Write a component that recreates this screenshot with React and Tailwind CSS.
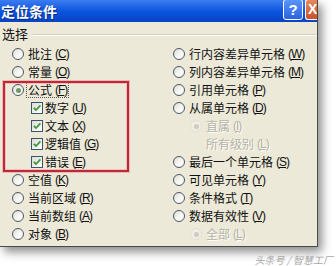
import React from "react";

const cjk = { fontFamily: '"Noto Sans CJK SC", "Noto Sans", sans-serif' };

const leftRows = [
    { type: "radio", label: "批注", key: "C" },
    { type: "radio", label: "常量", key: "O" },
    { type: "radio", label: "公式", key: "F", checked: true, focus: true },
    { type: "check", label: "数字", key: "U" },
    { type: "check", label: "文本", key: "X" },
    { type: "check", label: "逻辑值", key: "G" },
    { type: "check", label: "错误", key: "E" },
    { type: "radio", label: "空值", key: "K" },
    { type: "radio", label: "当前区域", key: "R" },
    { type: "radio", label: "当前数组", key: "A" },
    { type: "radio", label: "对象", key: "B" },
];

const rightRows = [
    { type: "radio", label: "行内容差异单元格", key: "W" },
    { type: "radio", label: "列内容差异单元格", key: "M" },
    { type: "radio", label: "引用单元格", key: "P" },
    { type: "radio", label: "从属单元格", key: "D" },
    { type: "sub", label: "直属", key: "I", checked: true },
    { type: "sub", label: "所有级别", key: "L", hideMark: true },
    { type: "radio", label: "最后一个单元格", key: "S" },
    { type: "radio", label: "可见单元格", key: "Y" },
    { type: "radio", label: "条件格式", key: "T" },
    { type: "radio", label: "数据有效性", key: "V" },
    { type: "sub", label: "全部", key: "L", checked: true },
];

function Label({ label, hotkey, disabled, focus }) {
    return (
        <span
            className={
                "flex items-center leading-none " +
                (disabled ? "text-[#b5b2a3] [text-shadow:1px_1px_0_#ffffff]" : "text-[#111]") +
                (focus ? " outline outline-1 outline-dotted outline-[#555] outline-offset-[1px]" : "")
            }
        >
            <span className="text-[12px]" style={cjk}>{label}</span>
            <span className="ml-[3px] text-[12px] tracking-[-1px] font-['Liberation_Sans',sans-serif]">
                (<span className="underline">{hotkey}</span>)
            </span>
        </span>
    );
}

function Radio({ checked, disabled, hidden }) {
    if (hidden) return <span className="w-[12px] h-[12px]" />;
    return (
        <span
            className={
                "flex h-[12px] w-[12px] items-center justify-center rounded-full border " +
                (disabled
                    ? "border-[#e2dfd4] bg-[#efede4]"
                    : "border-[#4a5668] bg-linear-to-br from-[#dcdad0] via-[#f6f5f0] to-white")
            }
        >
            {checked && (
                <span
                    className={
                        "h-[5px] w-[5px] rounded-full " + (disabled ? "bg-[#cfccbe]" : "bg-[#6f9a62]")
                    }
                />
            )}
        </span>
    );
}

function Check() {
    return (
        <span className="flex h-[12px] w-[12px] items-center justify-center border border-[#3a5470] bg-linear-to-br from-[#dedcd2] to-white">
            <svg width="10" height="10" viewBox="0 0 10 10">
                <path d="M1.8 4.8 L4 7 L8.4 2.4" fill="none" stroke="#3f9a3f" strokeWidth="1.8" />
            </svg>
        </span>
    );
}

function Row({ row }) {
    if (row.type === "check") {
        return (
            <div className="flex h-[18px] items-center gap-[2px] pl-[19px]">
                <Check />
                <Label label={row.label} hotkey={row.key} />
            </div>
        );
    }
    if (row.type === "sub") {
        return (
            <div className="flex h-[18px] items-center gap-[4px] pl-[17px]">
                <Radio checked={row.checked} disabled hidden={row.hideMark} />
                <Label label={row.label} hotkey={row.key} disabled />
            </div>
        );
    }
    return (
        <div className="flex h-[18px] items-center gap-[4px]">
            <Radio checked={row.checked} />
            <Label label={row.label} hotkey={row.key} focus={row.focus} />
        </div>
    );
}

export default function App() {
    return (
        <div className="relative h-[266px] w-[336px] overflow-hidden bg-white">
            <div className="flex h-[247px] w-[318px] flex-col border-r border-b border-[#4a4a4a] bg-[#ECE9D8] shadow-[4px_5px_9px_rgba(0,0,0,0.45)]">
                <div className="flex h-[22px] shrink-0 items-center justify-between bg-linear-to-b from-[#3b7cf0] via-[#0a55e0] to-[#0843c4]">
                    <span
                        className="pl-[1px] text-[14px] font-bold leading-none text-white [text-shadow:1px_1px_0_#0a2a80]"
                        style={cjk}
                    >
                        定位条件
                    </span>
                    <div className="flex h-full items-start gap-[2px] -mt-[3px]">
                        <span className="flex h-[21px] w-[20px] items-center justify-center rounded-[3px] border border-white bg-linear-to-b from-[#5a95f8] to-[#2a63e0] text-[15px] font-bold leading-none text-white font-['Liberation_Sans',sans-serif]">
                            ?
                        </span>
                        <span className="flex h-[21px] w-[12px] items-center justify-start overflow-hidden rounded-l-[3px] border border-r-0 border-white bg-linear-to-b from-[#e98a5e] to-[#c8502a] pl-[2px] text-[14px] font-bold leading-none text-white font-['Liberation_Sans',sans-serif]">
                            X
                        </span>
                    </div>
                </div>

                <div className="flex h-[23px] shrink-0 items-center pl-[2px]">
                    <span className="text-[13px] leading-none text-[#111]" style={cjk}>选择</span>
                    <span className="ml-[5px] mt-[3px] h-[2px] flex-1 border-t border-b border-t-[#d2cfbe] border-b-white" />
                </div>

                <div className="flex">
                    <div className="relative w-[173px] shrink-0 pl-[12px]">
                        {leftRows.map((row, i) => (
                            <Row key={i} row={row} />
                        ))}
                        <div className="absolute left-[3px] top-[36px] h-[91px] w-[126px] border-2 border-[#bb2a36] shadow-[0_0_0_1px_rgba(240,150,160,0.6),inset_0_0_0_1px_rgba(240,150,160,0.5)]" />
                    </div>
                    <div className="flex-1">
                        {rightRows.map((row, i) => (
                            <Row key={i} row={row} />
                        ))}
                    </div>
                </div>
            </div>
            <span
                className="absolute right-[3px] bottom-[1px] text-[10px] italic leading-none text-[#a8a8a8]"
                style={cjk}
            >
                头条号 / 智慧工厂
            </span>
        </div>
    );
}
